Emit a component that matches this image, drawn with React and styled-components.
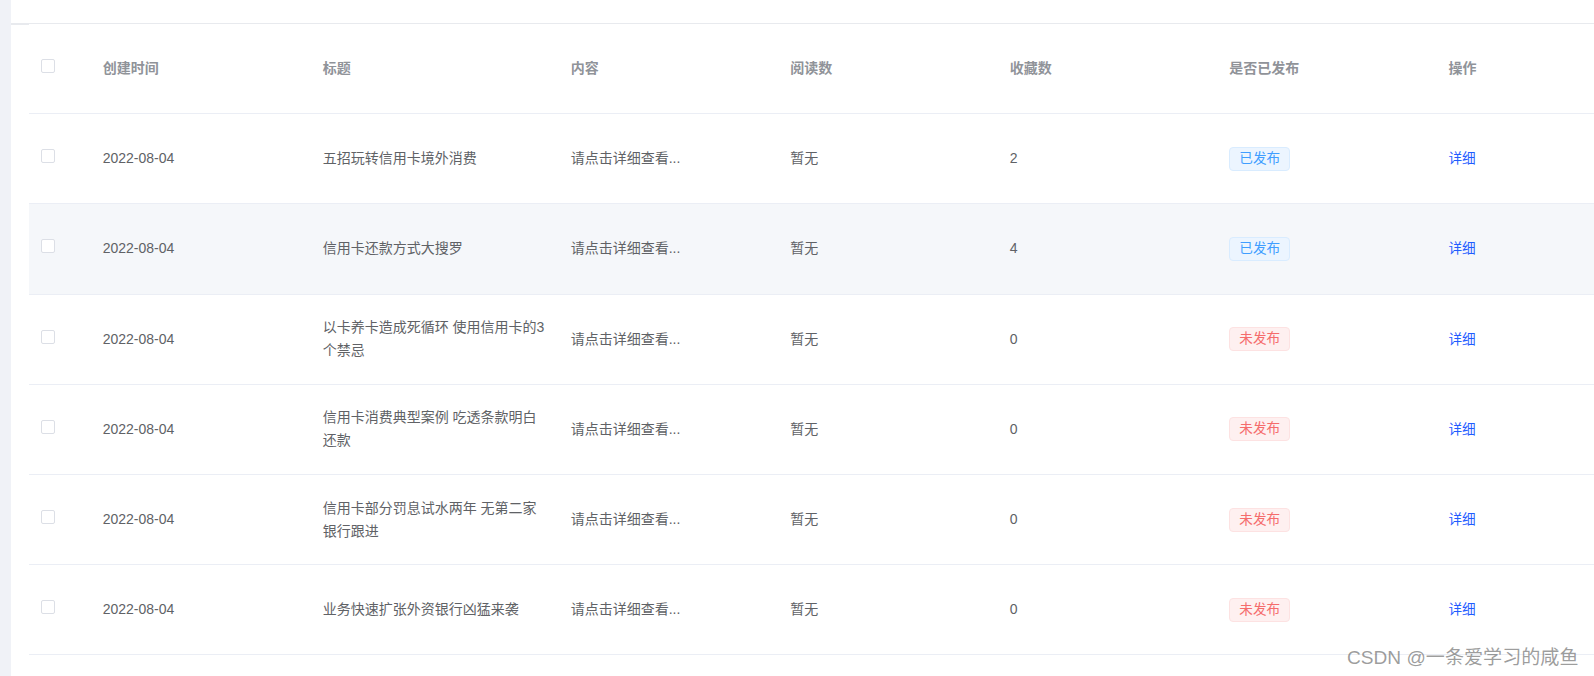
import React from "react";
import styled, { createGlobalStyle } from "styled-components";

const Global = createGlobalStyle`
  html, body { margin: 0; padding: 0; background: #fff; }
  body { font-family: "Liberation Sans", "Noto Sans CJK SC", sans-serif; font-size: 14px; color: #606266; }
`;

const Page = styled.div`
  display: flex;
  width: 1594px;
  height: 676px;
  overflow: hidden;
  position: relative;
  background: #fff;
`;
const Sidebar = styled.aside`
  width: 11px;
  flex: none;
  background: #f0f2f7;
`;
const Main = styled.main`
  flex: 1;
  min-width: 0;
  display: flex;
  flex-direction: column;
`;
const TopBar = styled.div`
  height: 23px;
  flex: none;
  border-bottom: 1px solid #e8eaee;
`;
const Content = styled.div`
  padding-left: 18px;
  position: relative;
`;
const TabEdge = styled.span`
  position: absolute;
  left: 0;
  top: 0;
  width: 18px;
  height: 1px;
  background: #e8eaee;
`;
const Row = styled.div`
  display: grid;
  grid-template-columns: 61.7px 220px 248px 219.5px 219.5px 219.5px 219.3px 1fr;
  align-items: center;
  height: 90.2px;
  box-sizing: border-box;
  border-bottom: 1px solid #ebeef5;
  background: ${p => (p.$stripe ? "#f5f7fa" : "#fff")};
  line-height: 23px;
`;
const Cell = styled.div`
  padding: 0 12px;
  min-width: 0;
`;
const HeadCell = styled(Cell)`
  color: #909399;
  font-weight: 700;
  font-size: 14px;
`;
const Check = styled.span`
  display: block;
  width: 14px;
  height: 14px;
  box-sizing: border-box;
  border: 1px solid #dcdfe6;
  border-radius: 2px;
  background: #fff;
  margin-top: -5px;
`;
const Tag = styled.span`
  display: inline-block;
  height: 24px;
  width: 61px;
  box-sizing: border-box;
  text-align: center;
  line-height: 22px;
  font-size: 13.6px;
  border-radius: 4px;
  border: 1px solid ${p => (p.$ok ? "#d9ecff" : "#fde2e2")};
  background: ${p => (p.$ok ? "#ecf5ff" : "#fef0f0")};
  color: ${p => (p.$ok ? "#409eff" : "#f56c6c")};
`;
const Detail = styled.a`
  color: #1f5cff;
  font-size: 13.6px;
`;
const Watermark = styled.div`
  position: absolute;
  left: 1347px;
  top: 645px;
  font-size: 19.1px;
  line-height: 26px;
  color: rgba(90, 90, 90, 0.6);
  white-space: nowrap;
`;

const rows = [
  ["五招玩转信用卡境外消费", 2, true],
  ["信用卡还款方式大搜罗", 4, true, true],
  ["以卡养卡造成死循环 使用信用卡的3个禁忌", 0, false],
  ["信用卡消费典型案例 吃透条款明白还款", 0, false],
  ["信用卡部分罚息试水两年 无第二家银行跟进", 0, false],
  ["业务快速扩张外资银行凶猛来袭", 0, false],
];

export default function App() {
  return (
    <Page>
      <Global />
      <Sidebar />
      <Main>
        <TopBar />
        <Content>
          <TabEdge />
          <Row>
            <Cell><Check /></Cell>
            {["创建时间", "标题", "内容", "阅读数", "收藏数", "是否已发布", "操作"].map(t => (
              <HeadCell key={t}>{t}</HeadCell>
            ))}
          </Row>
          {rows.map(([title, fav, ok, stripe]) => (
            <Row key={title} $stripe={stripe}>
              <Cell><Check /></Cell>
              <Cell>2022-08-04</Cell>
              <Cell>{title}</Cell>
              <Cell>请点击详细查看...</Cell>
              <Cell>暂无</Cell>
              <Cell>{fav}</Cell>
              <Cell><Tag $ok={ok}>{ok ? "已发布" : "未发布"}</Tag></Cell>
              <Cell><Detail>详细</Detail></Cell>
            </Row>
          ))}
        </Content>
      </Main>
      <Watermark>CSDN @一条爱学习的咸鱼</Watermark>
    </Page>
  );
}
